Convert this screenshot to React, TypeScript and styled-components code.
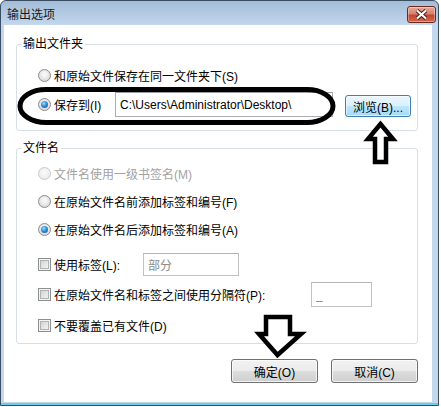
import styled, { createGlobalStyle } from 'styled-components';

const GlobalStyle = createGlobalStyle`
  html, body {
    margin: 0;
    padding: 0;
    background: #fff;
  }
  body {
    font-family: 'Liberation Sans', 'Noto Sans CJK SC', sans-serif;
    font-size: 12px;
    color: #000;
  }
`;

export default function App() {
  return (
    <>
      <GlobalStyle />
      <Window>
        <TitleBar>
          <Title>输出选项</Title>
          <CloseButton>
            <svg width="13" height="11" viewBox="0 0 13 11">
              <path d="M2 1.5 L11 9.5 M11 1.5 L2 9.5" stroke="#3a1d18" strokeWidth="4" />
              <path d="M2 1.5 L11 9.5 M11 1.5 L2 9.5" stroke="#fff" strokeWidth="2.2" />
            </svg>
          </CloseButton>
        </TitleBar>

        <Content>
          <Group>
            <Legend>输出文件夹</Legend>
            <GroupBody $top={13} $bottom={13}>
              <Row $h={20}>
                <Radio />
                <Label>和原始文件保存在同一文件夹下(S)</Label>
              </Row>
              <Row $h={25} $mt={7}>
                <Radio $checked />
                <Label $w={61}>保存到(I)</Label>
                <TextBox readOnly value="C:\Users\Administrator\Desktop\" $w={218} $h={25} />
                <BrowseButton>浏览(B)...</BrowseButton>
              </Row>
            </GroupBody>
          </Group>

          <Group $mt={9}>
            <Legend>文件名</Legend>
            <GroupBody $top={7} $bottom={8}>
              <Row $h={20}>
                <Radio $disabled />
                <Label $disabled>文件名使用一级书签名(M)</Label>
              </Row>
              <Row $h={20} $mt={8}>
                <Radio />
                <Label>在原始文件名前添加标签和编号(F)</Label>
              </Row>
              <Row $h={20} $mt={8}>
                <Radio $checked />
                <Label>在原始文件名后添加标签和编号(A)</Label>
              </Row>
              <Row $h={24} $mt={13}>
                <Checkbox />
                <Label $w={89}>使用标签(L):</Label>
                <TextBox readOnly value="部分" $w={96} $h={23} $muted />
              </Row>
              <Row $h={25} $mt={6}>
                <Checkbox />
                <Label $w={257}>在原始文件名和标签之间使用分隔符(P):</Label>
                <TextBox readOnly value="_" $w={61} $h={25} $muted />
              </Row>
              <Row $h={20} $mt={8}>
                <Checkbox />
                <Label>不要覆盖已有文件(D)</Label>
              </Row>
            </GroupBody>
          </Group>

          <ButtonRow>
            <PushButton>确定(O)</PushButton>
            <PushButton>取消(C)</PushButton>
          </ButtonRow>
        </Content>

        {/* hand-drawn annotations lying over the dialog */}
        <Annotations width="441" height="407" viewBox="0 0 441 407">
          <rect x="20" y="89.5" width="313" height="33" rx="26" ry="17" fill="none" stroke="#000" strokeWidth="5" />
          <path
            d="M380.5 124 L368 139 L375 139 L375 162 L386 162 L386 139 L393 139 Z"
            fill="#fff"
            stroke="#000"
            strokeWidth="4.5"
            strokeLinejoin="miter"
          />
          <path
            d="M266 317 L290 317 L290 334 L301 334 L277.5 355 L259 334 L266 334 Z"
            fill="#fff"
            stroke="#000"
            strokeWidth="4.5"
            strokeLinejoin="miter"
          />
        </Annotations>
      </Window>
    </>
  );
}

const Window = styled.div`
  position: relative;
  width: 439px;
  height: 406px;
  box-sizing: border-box;
  border: 1px solid #3a4e63;
  border-radius: 6px 6px 0 0;
  background: linear-gradient(to bottom, #a3bcd8 0px, #c3d7ed 24px, #c3d7ed 100%);
  box-shadow: inset 0 -2px 0 #6fcbec;
  display: flex;
  flex-direction: column;
  padding: 0 6px 3px 3px;
`;

const TitleBar = styled.div`
  height: 24px;
  flex-shrink: 0;
  display: flex;
  align-items: center;
  justify-content: space-between;
  padding-left: 3px;
`;

const Title = styled.span`
  font-size: 12px;
  color: #1a1a1a;
`;

const CloseButton = styled.div`
  width: 29px;
  height: 17px;
  box-sizing: border-box;
  margin-right: -4px;
  margin-top: 2px;
  border: 1px solid #6b2a1f;
  border-radius: 3px;
  background: linear-gradient(to bottom, #e7a998 0%, #d9826d 45%, #c5452e 55%, #d06a4f 100%);
  box-shadow: inset 0 0 0 1px rgba(255, 255, 255, 0.35);
  display: flex;
  align-items: center;
  justify-content: center;
`;

const Content = styled.div`
  flex: 1;
  background: #fff;
  padding: 11px 14px 0 12px;
  display: flex;
  flex-direction: column;
`;

const Group = styled.fieldset<{ $mt?: number }>`
  margin: ${({ $mt }) => $mt ?? 0}px 0 0 0;
  padding: 0;
  min-width: 0;
  border: 1px solid #d5dfe5;
  border-radius: 3px;
`;

const Legend = styled.legend`
  font-size: 12px;
  line-height: 16px;
  padding: 0 2px;
  margin-left: 4px;
`;

const GroupBody = styled.div<{ $top: number; $bottom: number }>`
  display: flex;
  flex-direction: column;
  padding: ${({ $top }) => $top}px 0 ${({ $bottom }) => $bottom}px 21px;
`;

const Row = styled.div<{ $h: number; $mt?: number }>`
  display: flex;
  align-items: center;
  height: ${({ $h }) => $h}px;
  margin-top: ${({ $mt }) => $mt ?? 0}px;
`;

const Label = styled.span<{ $w?: number; $disabled?: boolean }>`
  font-size: 12px;
  white-space: nowrap;
  color: ${({ $disabled }) => ($disabled ? '#a2a2a2' : '#000')};
  ${({ $w }) => ($w ? `width: ${$w}px; flex-shrink: 0;` : '')}
`;

const Radio = styled.span<{ $checked?: boolean; $disabled?: boolean }>`
  width: 13px;
  height: 13px;
  box-sizing: border-box;
  flex-shrink: 0;
  margin-right: 3px;
  border-radius: 50%;
  border: 1px solid ${({ $disabled }) => ($disabled ? '#c9c9c9' : '#8b8c8c')};
  background: ${({ $disabled }) =>
    $disabled
      ? 'radial-gradient(circle at 50% 40%, #fbfbfb, #e6e6e6)'
      : 'radial-gradient(circle at 50% 40%, #f6f6f6 20%, #d2d2d2 90%)'};
  display: flex;
  align-items: center;
  justify-content: center;

  &::after {
    content: '';
    display: ${({ $checked }) => ($checked ? 'block' : 'none')};
    width: 7px;
    height: 7px;
    border-radius: 50%;
    background: radial-gradient(circle at 40% 35%, #9fdcff 0%, #2f8fd6 45%, #154f8a 100%);
  }
`;

const Checkbox = styled.span`
  width: 13px;
  height: 13px;
  box-sizing: border-box;
  flex-shrink: 0;
  margin-right: 3px;
  border: 1px solid #8e8f8f;
  background: linear-gradient(135deg, #c8c9ca 0%, #e9e9e9 60%, #f8f8f8 100%);
  box-shadow: inset 0 0 0 1px #f4f4f4, inset 0 0 0 2px #b0b3b6;
`;

const TextBox = styled.input<{ $w: number; $h: number; $muted?: boolean }>`
  width: ${({ $w }) => $w}px;
  height: ${({ $h }) => $h}px;
  box-sizing: border-box;
  flex-shrink: 0;
  margin: 0;
  padding: 0 0 0 4px;
  border: 1px solid ${({ $muted }) => ($muted ? '#c2c2c2' : '#abadb3')};
  border-top-color: ${({ $muted }) => ($muted ? '#b2b2b2' : '#9a9ca3')};
  border-radius: 0;
  background: #fff;
  outline: none;
  font-family: 'Liberation Sans', 'Noto Sans CJK SC', sans-serif;
  font-size: 12px;
  color: ${({ $muted }) => ($muted ? '#8a8a8a' : '#000')};
`;

const BrowseButton = styled.button`
  align-self: flex-end;
  width: 66px;
  height: 22px;
  margin: 0 0 0 12px;
  padding: 0;
  box-sizing: border-box;
  border: 1px solid #3c7fb1;
  border-radius: 3px;
  background: linear-gradient(to bottom, #eaf6fd 0%, #d9f0fc 50%, #bee6fd 51%, #a7d9f5 100%);
  box-shadow: inset 0 0 0 1px rgba(255, 255, 255, 0.6);
  font-family: 'Liberation Sans', 'Noto Sans CJK SC', sans-serif;
  font-size: 12px;
  color: #000;
`;

const ButtonRow = styled.div`
  display: flex;
  justify-content: flex-end;
  gap: 13px;
  margin-top: 15px;
`;

const PushButton = styled.button`
  width: 87px;
  height: 24px;
  margin: 0;
  padding: 0;
  box-sizing: border-box;
  border: 1px solid #707070;
  border-radius: 3px;
  background: linear-gradient(to bottom, #f2f2f2 0%, #ebebeb 50%, #dddddd 51%, #cfcfcf 100%);
  box-shadow: inset 0 0 0 1px rgba(255, 255, 255, 0.7);
  font-family: 'Liberation Sans', 'Noto Sans CJK SC', sans-serif;
  font-size: 12px;
  color: #000;
`;

const Annotations = styled.svg`
  position: absolute;
  left: -1px;
  top: -1px;
  pointer-events: none;
`;
